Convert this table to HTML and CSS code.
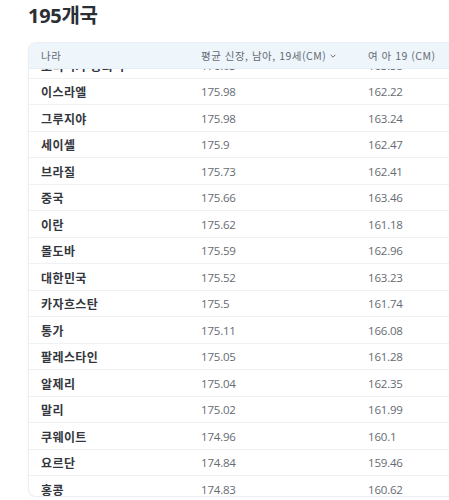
FILE: index.html
```html
<!DOCTYPE html>
<html lang="ko">
<head>
<meta charset="utf-8">
<link rel="stylesheet" href="styles.css">
</head>
<body>
<div class="page">
  <h1 class="title">195개국</h1>
  <div class="card">
    <div class="thead">
      <div class="th">나라</div>
      <div class="th">평균 신장, 남아, 19세(CM)<svg class="chev" viewBox="0 0 10 10" width="8" height="8"><path d="M2 3.5 L5 6.5 L8 3.5" fill="none" stroke="#666" stroke-width="1.2"/></svg></div>
      <div class="th">여 아 19 (CM)</div>
    </div>
    <div class="viewport">
      <div class="tbody">
        <div class="tr"><div class="name">도미니카 공화국</div><div class="num">176.03</div><div class="num">163.58</div></div>
        <div class="tr"><div class="name">이스라엘</div><div class="num">175.98</div><div class="num">162.22</div></div>
        <div class="tr"><div class="name">그루지야</div><div class="num">175.98</div><div class="num">163.24</div></div>
        <div class="tr"><div class="name">세이셸</div><div class="num">175.9</div><div class="num">162.47</div></div>
        <div class="tr"><div class="name">브라질</div><div class="num">175.73</div><div class="num">162.41</div></div>
        <div class="tr"><div class="name">중국</div><div class="num">175.66</div><div class="num">163.46</div></div>
        <div class="tr"><div class="name">이란</div><div class="num">175.62</div><div class="num">161.18</div></div>
        <div class="tr"><div class="name">몰도바</div><div class="num">175.59</div><div class="num">162.96</div></div>
        <div class="tr"><div class="name">대한민국</div><div class="num">175.52</div><div class="num">163.23</div></div>
        <div class="tr"><div class="name">카자흐스탄</div><div class="num">175.5</div><div class="num">161.74</div></div>
        <div class="tr"><div class="name">통가</div><div class="num">175.11</div><div class="num">166.08</div></div>
        <div class="tr"><div class="name">팔레스타인</div><div class="num">175.05</div><div class="num">161.28</div></div>
        <div class="tr"><div class="name">알제리</div><div class="num">175.04</div><div class="num">162.35</div></div>
        <div class="tr"><div class="name">말리</div><div class="num">175.02</div><div class="num">161.99</div></div>
        <div class="tr"><div class="name">쿠웨이트</div><div class="num">174.96</div><div class="num">160.1</div></div>
        <div class="tr"><div class="name">요르단</div><div class="num">174.84</div><div class="num">159.46</div></div>
        <div class="tr"><div class="name">홍콩</div><div class="num">174.83</div><div class="num">160.62</div></div>
      </div>
    </div>
  </div>
</div>
</body>
</html>
```

FILE: styles.css
```css
html, body {
  margin: 0;
  padding: 0;
  background: #ffffff;
  overflow: hidden;
}
.page {
  padding: 0 0 0 28px;
  font-family: "Open Sans", "Noto Sans CJK KR", sans-serif;
}
.title {
  margin: 0;
  padding-top: 1px;
  height: 41px;
  font-family: "Noto Sans", "Noto Sans CJK KR", sans-serif;
  font-size: 20px;
  font-weight: 700;
  color: #2a2e35;
  line-height: 30px;
  letter-spacing: -0.3px;
}
.card {
  width: 470px;
  height: 453px;
  border: 1px solid #eceef1;
  border-radius: 8px;
  overflow: hidden;
  box-shadow: 0 1px 3px rgba(0,0,0,0.04);
  background: #fff;
  display: flex;
  flex-direction: column;
}
.thead {
  flex: none;
  display: grid;
  grid-template-columns: 160px 167px 1fr;
  padding-left: 12px;
  height: 25px;
  align-items: center;
  background: #eef5fb;
  border-bottom: 1px solid #e6eef5;
}
.th {
  font-family: "Noto Sans CJK KR", sans-serif;
  font-size: 10.5px;
  color: #646a72;
  display: flex;
  align-items: center;
  gap: 3px;
  letter-spacing: 0.5px;
}
.chev {
  margin-top: 1px;
}
.viewport {
  flex: 1;
  overflow: hidden;
}
.tbody {
  margin-top: -17px;
}
.tr {
  display: grid;
  grid-template-columns: 160px 167px 1fr;
  padding-left: 12px;
  height: 24.5px;
  padding-top: 1px;
  align-items: center;
  border-bottom: 1px solid #eff1f3;
  box-sizing: content-box;
}
.name {
  font-family: "Noto Sans CJK KR", sans-serif;
  font-weight: 700;
  font-size: 12px;
  color: #33373d;
  letter-spacing: 0.4px;
}
.num {
  font-family: "Open Sans", sans-serif;
  font-size: 11.5px;
  color: #666b72;
  letter-spacing: -0.2px;
}
```
